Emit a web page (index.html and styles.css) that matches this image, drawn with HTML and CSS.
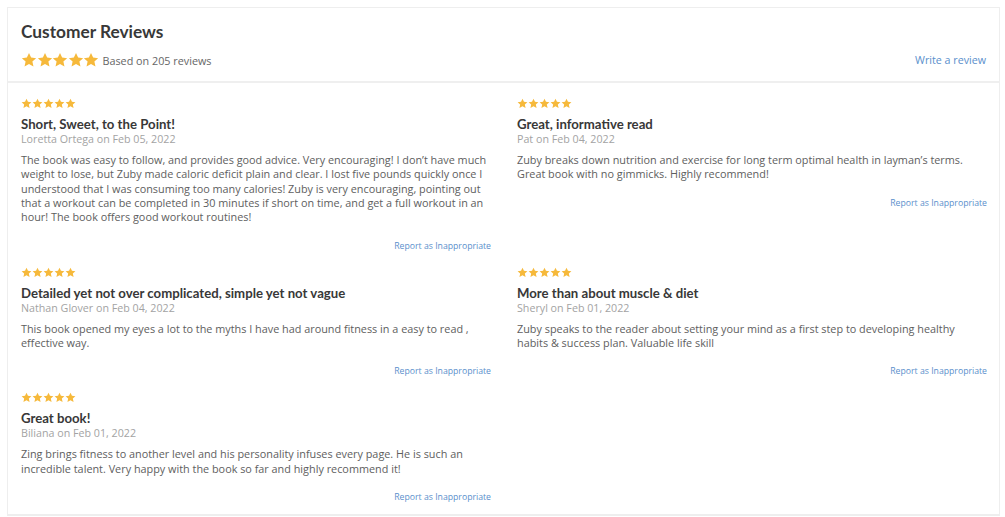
FILE: index.html
```html
<!DOCTYPE html>
<html>
<head>
<meta charset="utf-8">
<link rel="stylesheet" href="styles.css">
</head>
<body>
<svg width="0" height="0" class="defs">
  <defs>
    <symbol id="star" viewBox="0 0 24 24"><path d="M12 1.5l3.2 6.9 7.5.8-5.6 5.1 1.6 7.4L12 17.9l-6.7 3.8 1.6-7.4-5.6-5.1 7.5-.8z"/></symbol>
  </defs>
</svg>
<section class="reviews">
  <header class="head">
    <div class="head-left">
      <h2 class="title">Customer Reviews</h2>
      <div class="summary">
        <span class="stars big">
          <svg><use href="#star"/></svg><svg><use href="#star"/></svg><svg><use href="#star"/></svg><svg><use href="#star"/></svg><svg><use href="#star"/></svg>
        </span>
        <span class="based">Based on 205 reviews</span>
      </div>
    </div>
    <a class="write" href="#">Write a review</a>
  </header>
  <div class="grid">
    <article class="review">
      <span class="stars small"><svg><use href="#star"/></svg><svg><use href="#star"/></svg><svg><use href="#star"/></svg><svg><use href="#star"/></svg><svg><use href="#star"/></svg></span>
      <h3 class="r-title">Short, Sweet, to the Point!</h3>
      <div class="meta">Loretta Ortega on Feb 05, 2022</div>
      <p class="body">The book was easy to follow, and provides good advice. Very encouraging! I don’t have much weight to lose, but Zuby made caloric deficit plain and clear. I lost five pounds quickly once I understood that I was consuming too many calories! Zuby is very encouraging, pointing out that a workout can be completed in 30 minutes if short on time, and get a full workout in an hour! The book offers good workout routines!</p>
      <a class="report" href="#">Report as Inappropriate</a>
    </article>
    <article class="review">
      <span class="stars small"><svg><use href="#star"/></svg><svg><use href="#star"/></svg><svg><use href="#star"/></svg><svg><use href="#star"/></svg><svg><use href="#star"/></svg></span>
      <h3 class="r-title">Great, informative read</h3>
      <div class="meta">Pat on Feb 04, 2022</div>
      <p class="body">Zuby breaks down nutrition and exercise for long term optimal health in layman’s terms. Great book with no gimmicks. Highly recommend!</p>
      <a class="report" href="#">Report as Inappropriate</a>
    </article>
    <article class="review">
      <span class="stars small"><svg><use href="#star"/></svg><svg><use href="#star"/></svg><svg><use href="#star"/></svg><svg><use href="#star"/></svg><svg><use href="#star"/></svg></span>
      <h3 class="r-title">Detailed yet not over complicated, simple yet not vague</h3>
      <div class="meta">Nathan Glover on Feb 04, 2022</div>
      <p class="body">This book opened my eyes a lot to the myths I have had around fitness in a easy to read , effective way.</p>
      <a class="report" href="#">Report as Inappropriate</a>
    </article>
    <article class="review">
      <span class="stars small"><svg><use href="#star"/></svg><svg><use href="#star"/></svg><svg><use href="#star"/></svg><svg><use href="#star"/></svg><svg><use href="#star"/></svg></span>
      <h3 class="r-title">More than about muscle &amp; diet</h3>
      <div class="meta">Sheryl on Feb 01, 2022</div>
      <p class="body">Zuby speaks to the reader about setting your mind as a first step to developing healthy habits &amp; success plan. Valuable life skill</p>
      <a class="report" href="#">Report as Inappropriate</a>
    </article>
    <article class="review">
      <span class="stars small"><svg><use href="#star"/></svg><svg><use href="#star"/></svg><svg><use href="#star"/></svg><svg><use href="#star"/></svg><svg><use href="#star"/></svg></span>
      <h3 class="r-title">Great book!</h3>
      <div class="meta">Biliana on Feb 01, 2022</div>
      <p class="body">Zing brings fitness to another level and his personality infuses every page. He is such an incredible talent. Very happy with the book so far and highly recommend it!</p>
      <a class="report" href="#">Report as Inappropriate</a>
    </article>
  </div>
</section>
</body>
</html>
```
FILE: styles.css
```css
html, body { margin: 0; padding: 0; background: #fff; }
body { padding: 7px 5px 0 7px; font-family: "Open Sans", "Liberation Sans", sans-serif; color: #555; }
.defs { position: absolute; width: 0; height: 0; }

.reviews {
  border: 1px solid #eeeeee;
  border-bottom-width: 2px;
  box-sizing: border-box;
  width: 993px;
}
.head {
  display: flex;
  justify-content: space-between;
  align-items: flex-end;
  padding: 13px 13px 12px 13px;
  border-bottom: 2px solid #efefef;
}
.title {
  margin: 0;
  font-family: "Lato", sans-serif;
  font-size: 17.3px;
  font-weight: bold;
  color: #383838;
  line-height: 22px;
}
.summary { display: flex; align-items: center; margin-top: 8px; height: 18px; }
.stars { display: inline-flex; fill: #f6b93b; }
.stars.big svg { width: 16px; height: 16px; margin-right: -0.5px; }
.stars.small { height: 11px; }
.stars.small svg { width: 11px; height: 11px; }
.based { margin-left: 4px; font-size: 10.8px; color: #666; }
.write { font-size: 10.7px; color: #5a8fcc; text-decoration: none; line-height: 18px; }

.grid {
  display: grid;
  grid-template-columns: 470px 470px;
  column-gap: 26px;
  row-gap: 15px;
  padding: 15px 13px 11px 13px;
  align-items: start;
}
.review { display: flex; flex-direction: column; }
.r-title {
  margin: 7px 0 0 0;
  font-family: "Lato", sans-serif;
  font-weight: bold;
  font-size: 13.2px;
  line-height: 16px;
  color: #383838;
}
.meta { font-size: 10.7px; color: #a3a3a3; line-height: 15px; }
.body { margin: 6px 0 0 0; font-size: 10.85px; line-height: 14.33px; color: #5e5e5e; }
.report {
  align-self: flex-end;
  font-size: 8.7px;
  color: #5a8fcc;
  text-decoration: none;
  line-height: 12px;
  margin-top: 15px;
}
```
